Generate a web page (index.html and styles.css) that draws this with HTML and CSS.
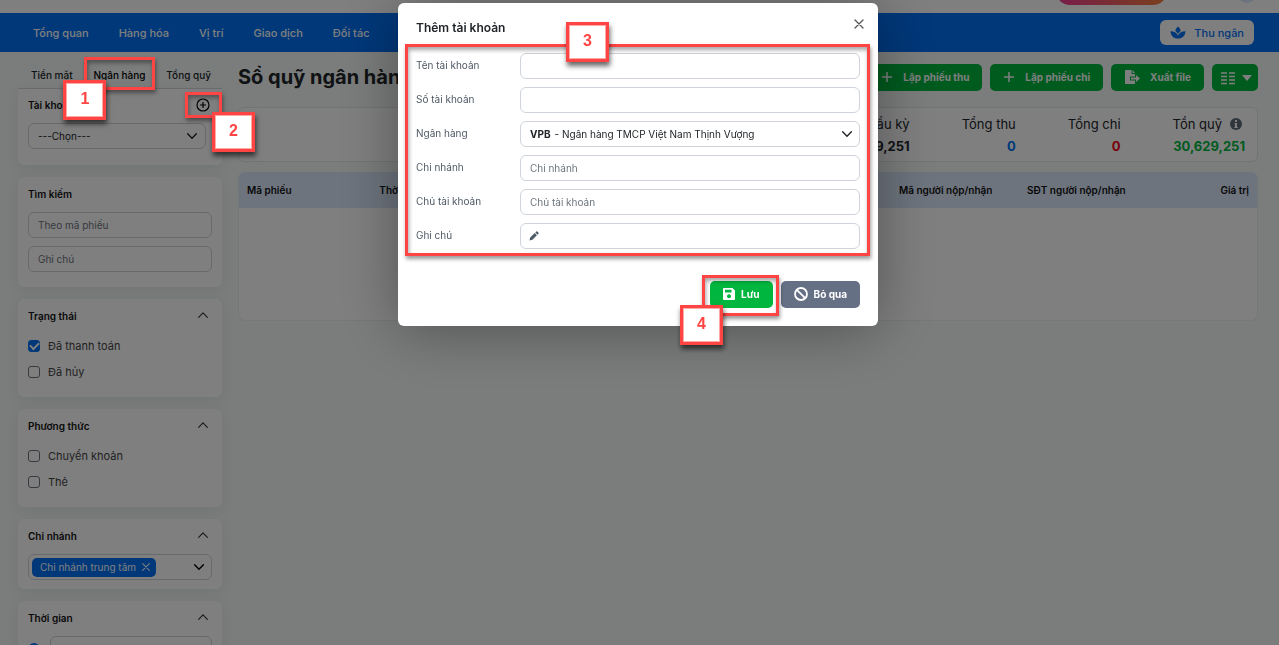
FILE: index.html
```html
<!DOCTYPE html>
<html lang="vi">
<head>
<meta charset="utf-8">
<meta name="viewport" content="width=device-width, initial-scale=1">
<title>Sổ quỹ ngân hàng</title>
<link rel="stylesheet" href="styles.css">
</head>
<body>
<svg class="sprite" aria-hidden="true">
  <symbol id="down" viewBox="0 0 16 16"><path d="M3 5.500l5 5 5-5" fill="none" stroke="currentColor" stroke-width="1.600" stroke-linecap="round" stroke-linejoin="round"/></symbol>
  <symbol id="up" viewBox="0 0 16 16"><path d="M3 9.500l5-5 5 5" fill="none" stroke="currentColor" stroke-width="1.300" stroke-linecap="round" stroke-linejoin="round"/></symbol>
  <symbol id="plus" viewBox="0 0 12 12"><path d="M6 1v10M1 6h10" fill="none" stroke="currentColor" stroke-width="1.500"/></symbol>
  <symbol id="cross" viewBox="0 0 12 12"><path d="M2 2l8 8M10 2l-8 8" fill="none" stroke="currentColor" stroke-width="1.300" stroke-linecap="round"/></symbol>
</svg>

<header class="topbar">
  <span class="promo"></span>
  <span class="avatar"></span>
</header>
<nav class="nav">
  <a class="nav-link" href="#">Tổng quan</a>
  <a class="nav-link" href="#">Hàng hóa</a>
  <a class="nav-link" href="#">Vị trí</a>
  <a class="nav-link" href="#">Giao dịch</a>
  <a class="nav-link" href="#">Đối tác</a>
  <button class="cashier" type="button">
    <svg class="icon-16" viewBox="0 0 16 16" aria-hidden="true"><path fill="currentColor" d="M8 1.500c1.800 1.500 2.600 3 2.600 4.500C9.500 6.800 8.500 7.900 8 9.200 7.500 7.900 6.500 6.800 5.400 6 5.400 4.500 6.200 3 8 1.500zM.5 6.200c4 0 6.500 1.600 7.500 4.600 1-3 3.500-4.600 7.500-4.600-.2 4.400-3 7.300-7.500 7.300S.7 10.600.5 6.200z"/></svg>
    Thu ngân
  </button>
</nav>

<div class="layout">
  <aside class="sidebar">
    <div class="tabs">
      <a class="tab" href="#">Tiền mặt</a>
      <a class="tab tab-active" href="#">Ngân hàng<span class="mark mark-tab"></span><span class="step step-1">1</span></a>
      <a class="tab" href="#">Tổng quỹ</a>
    </div>
    <section class="card card-account">
      <div class="card-head">
        <label class="card-title" for="account">Tài khoản</label>
        <button class="add" type="button" aria-label="Thêm tài khoản">
          <svg class="icon-14" viewBox="0 0 14 14" aria-hidden="true"><g fill="none" stroke="currentColor" stroke-width="1.200"><circle cx="7" cy="7" r="6"/><path d="M7 4v6M4 7h6"/></g></svg>
          <span class="mark mark-add"></span><span class="step step-2">2</span>
        </button>
      </div>
      <div class="field field-account">
        <select id="account"><option>---Chọn---</option></select>
        <svg class="icon-14"><use href="#down"/></svg>
      </div>
    </section>

    <section class="card card-search">
      <h2 class="card-title">Tìm kiếm</h2>
      <input class="field" type="text" placeholder="Theo mã phiếu" aria-label="Theo mã phiếu">
      <input class="field" type="text" placeholder="Ghi chú" aria-label="Ghi chú">
    </section>

    <section class="card card-checks">
      <div class="card-head"><h2 class="card-title">Trạng thái</h2><svg class="icon-14"><use href="#up"/></svg></div>
      <label class="check"><input type="checkbox" checked>Đã thanh toán</label>
      <label class="check"><input type="checkbox">Đã hủy</label>
    </section>

    <section class="card card-checks">
      <div class="card-head"><h2 class="card-title">Phương thức</h2><svg class="icon-14"><use href="#up"/></svg></div>
      <label class="check"><input type="checkbox">Chuyển khoản</label>
      <label class="check"><input type="checkbox">Thẻ</label>
    </section>

    <section class="card card-branch">
      <div class="card-head"><h2 class="card-title">Chi nhánh</h2><svg class="icon-14"><use href="#up"/></svg></div>
      <div class="field field-tags">
        <button class="tag" type="button">Chi nhánh trung tâm<svg class="icon-10"><use href="#cross"/></svg></button>
        <svg class="icon-14 dark"><use href="#down"/></svg>
      </div>
    </section>

    <section class="card card-time">
      <div class="card-head"><h2 class="card-title">Thời gian</h2><svg class="icon-14"><use href="#up"/></svg></div>
      <div class="time-row">
        <input type="radio" name="time" checked aria-label="Tháng này">
        <div class="field"><select aria-label="Thời gian"><option>Tháng này</option></select><svg class="icon-14"><use href="#down"/></svg></div>
      </div>
    </section>
  </aside>

  <main class="main">
    <div class="heading">
      <h1 class="title">Sổ quỹ ngân hàng</h1>
      <div class="actions">
        <button class="btn" type="button"><svg class="icon-12"><use href="#plus"/></svg>Lập phiếu thu</button>
        <button class="btn" type="button"><svg class="icon-12"><use href="#plus"/></svg>Lập phiếu chi</button>
        <button class="btn" type="button"><svg class="icon-16" viewBox="0 0 16 16" aria-hidden="true"><path fill="currentColor" d="M1 1h6.500v4H11v2.500H6v4h5V15H1zM8.500 1L11 4H8.500zM12 6l4 3.500-4 3.500v-2.500H7v-2h5z"/></svg>Xuất file</button>
        <button class="btn btn-columns" type="button" aria-label="Cột hiển thị"><svg class="icon-14" viewBox="0 0 14 14" aria-hidden="true"><path d="M0 2h6M8 2h6M0 5.500h6M8 5.500h6M0 9h6M8 9h6M0 12.500h6M8 12.500h6" stroke="currentColor" stroke-width="1.300"/></svg><svg class="caret" viewBox="0 0 10 6" aria-hidden="true"><path d="M0 0h10L5 6z" fill="currentColor"/></svg></button>
      </div>
    </div>

    <div class="summary">
      <div class="stat"><span>Quỹ đầu kỳ</span><strong>30,629,251</strong></div>
      <div class="stat"><span>Tổng thu</span><strong class="blue">0</strong></div>
      <div class="stat"><span>Tổng chi</span><strong class="red">0</strong></div>
      <div class="stat"><span class="stat-info">Tồn quỹ<svg class="icon-12" viewBox="0 0 12 12" aria-hidden="true"><circle cx="6" cy="6" r="6" fill="#5f6b7a"/><path d="M5 2h2v2H5zM4.500 5H7v4h.8v1H4.300V9H5V6h-.5z" fill="#fff"/></svg></span><strong class="green">30,629,251</strong></div>
    </div>

    <div class="table-card">
      <table class="table">
        <thead><tr><th class="col-code">Mã phiếu</th><th>Thời gian</th><th class="col-payer">Mã người nộp/nhận</th><th class="col-phone">SĐT người nộp/nhận</th><th class="col-value">Giá trị</th></tr></thead>
      </table>
    </div>
  </main>
</div>

<div class="backdrop"></div>
<div class="dialog-wrap">
  <div class="dialog" role="dialog" aria-modal="true" aria-labelledby="dialog-title">
    <div class="dialog-head">
      <h2 class="dialog-title" id="dialog-title">Thêm tài khoản</h2>
      <button class="close" type="button" aria-label="Đóng"><svg class="icon-12"><use href="#cross"/></svg></button>
    </div>
    <form class="form">
      <label for="name">Tên tài khoản</label><input class="field" id="name" type="text">
      <label for="number">Số tài khoản</label><input class="field" id="number" type="text">
      <label for="bank">Ngân hàng</label>
      <div class="field field-bank"><b>VPB</b><select id="bank"><option>- Ngân hàng TMCP Việt Nam Thịnh Vượng</option></select><svg class="icon-14"><use href="#down"/></svg></div>
      <label for="branch">Chi nhánh</label><input class="field" id="branch" type="text" placeholder="Chi nhánh">
      <label for="owner">Chủ tài khoản</label><input class="field" id="owner" type="text" placeholder="Chủ tài khoản">
      <label for="note">Ghi chú</label>
      <div class="field field-note"><svg class="icon-10" viewBox="0 0 10 10" aria-hidden="true"><path fill="currentColor" d="M.5 9.500L1.200 6.600 5.700 2.100l2.200 2.200L3.400 8.800zM6.300 1.500L7.300.5q.5-.4 1 0L9.500 1.700q.4.500 0 1L8.500 3.700z"/></svg><input id="note" type="text"></div>
      <span class="mark mark-form"></span><span class="step step-3">3</span>
    </form>
    <div class="dialog-foot">
      <div class="save-wrap">
        <button class="btn" type="button"><svg class="icon-12" viewBox="0 0 12 12" aria-hidden="true"><path fill="currentColor" fill-rule="evenodd" d="M1 0h8.500L12 2.500V11q0 1-1 1H1q-1 0-1-1V1q0-1 1-1zM2 1.800v2.700h6.500V1.800zM6 6.300a2 2 0 1 0 .01 0z"/></svg>Lưu</button>
        <span class="mark mark-save"></span><span class="step step-4">4</span>
      </div>
      <button class="btn btn-grey" type="button"><svg class="icon-14" viewBox="0 0 14 14" aria-hidden="true"><g fill="none" stroke="currentColor" stroke-width="1.800"><circle cx="7" cy="7" r="6"/><path d="M2.800 2.800l8.400 8.400"/></g></svg>Bỏ qua</button>
    </div>
  </div>
</div>
</body>
</html>
```
FILE: styles.css
```css
* { box-sizing: border-box; }
html { overflow: hidden; }
body {
  margin: 0;
  height: 100vh;
  overflow: hidden;
  background: #f5faf8;
  color: #212529;
  font: 10px/16px Inter, "Noto Sans", sans-serif;
}
button, input, select { font: inherit; color: inherit; }
button { cursor: pointer; }
h1, h2 { margin: 0; }
a { color: inherit; text-decoration: none; }
svg { flex: none; display: block; }
.sprite { position: absolute; width: 0; height: 0; }
.icon-10 { width: 10px; height: 10px; }
.icon-12 { width: 12px; height: 12px; }
.icon-14 { width: 14px; height: 14px; }
.icon-16 { width: 16px; height: 16px; }
.dark { color: #000; }

.topbar {
  display: flex;
  align-items: flex-end;
  justify-content: flex-end;
  gap: 70px;
  height: 13px;
  padding: 0 22px 8px 0;
  overflow: hidden;
  background: #fff;
}
.promo { width: 111px; height: 28px; border-radius: 14px; background: linear-gradient(90deg, #f03a96, #f5803a); }
.avatar { width: 20px; height: 20px; margin-bottom: 2px; border-radius: 10px; background: #dbe8fb; }

.nav {
  display: flex;
  align-items: center;
  gap: 30px;
  height: 39px;
  padding: 0 25px 0 33px;
  background: #0070f4;
  color: #fff;
  font-size: 11px;
  font-weight: 500;
}
.cashier {
  display: flex;
  align-items: center;
  gap: 8px;
  height: 25px;
  margin-left: auto;
  padding: 0 10px;
  border: 0;
  border-radius: 6px;
  background: #fff;
  color: #0070f4;
}

.layout { display: flex; gap: 16px; padding: 0 21px 0 18px; }
.sidebar { display: flex; flex-direction: column; flex: none; gap: 12px; width: 204px; }
.tabs {
  display: flex;
  justify-content: space-between;
  height: 37px;
  margin-bottom: -12px;
  padding: 15px 11px 0 13px;
  border-bottom: 1px solid #d5d9df;
  font-weight: 500;
}
.tab-active { position: relative; color: #000; }
.card {
  display: flex;
  flex-direction: column;
  padding: 8px 10px;
  border-radius: 6px;
  background: #fff;
  box-shadow: 0 4px 14px rgba(60, 70, 100, .08);
}
.card-head { display: flex; align-items: center; justify-content: space-between; padding-right: 2px; color: #333; }
.card-title { font-size: 10px; font-weight: 600; line-height: 18px; color: #111; }
.card-account { height: 76px; border-radius: 0 0 6px 6px; padding-top: 7px; }
.add { position: relative; padding: 0; border: 0; background: none; color: #000; }
.field {
  display: flex;
  align-items: center;
  width: 100%;
  height: 26px;
  padding: 0 9px;
  border: 1px solid #ced4da;
  border-radius: 6px;
  background: #fff;
  outline: 0;
}
.field::placeholder { color: #6c757d; opacity: 1; }
.field select, .field input { flex: 1; min-width: 0; padding: 0; border: 0; outline: 0; appearance: none; background: none; }
.field-account { width: 178px; margin-top: 9px; padding-right: 6px; }
.card-search { height: 110px; gap: 8px; }
.card-search .card-title { margin-bottom: 1px; }
.card-checks { height: 98px; }
.check { display: flex; align-items: center; gap: 8px; height: 16px; margin-top: 10px; color: #444; font-size: 11px; }
.card-head + .check { margin-top: 13px; }
.check input {
  appearance: none;
  display: grid;
  place-items: center;
  width: 12px;
  height: 12px;
  margin: 0;
  border: 1px solid #6c757d;
  border-radius: 3px;
}
.check input:checked { border-color: #0070f4; background: #0070f4; }
.check input:checked::after {
  content: "";
  width: 7px;
  height: 4px;
  margin-bottom: 2px;
  border: solid #fff;
  border-width: 0 0 2px 2px;
  transform: rotate(-45deg);
}
.card-branch { height: 70px; }
.field-tags { justify-content: space-between; margin-top: 9px; padding: 0 5px 0 3px; }
.tag {
  display: flex;
  align-items: center;
  gap: 5px;
  height: 19px;
  padding: 0 5px 0 8px;
  border: 0;
  border-radius: 5px;
  background: #0070f4;
  color: #fff;
}
.card-time { height: 98px; }
.time-row { display: flex; align-items: center; gap: 10px; margin-top: 9px; }
.time-row > input { appearance: none; flex: none; width: 12px; height: 12px; margin: 0; border-radius: 6px; background: #0070f4; }
.time-row .field { padding-right: 6px; }

.main { flex: 1; min-width: 0; }
.heading { display: flex; align-items: center; justify-content: space-between; margin-top: 12px; }
.title { font-size: 20px; font-weight: 700; line-height: 27px; }
.actions { display: flex; gap: 8px; }
.btn {
  display: flex;
  align-items: center;
  justify-content: center;
  gap: 10px;
  height: 27px;
  padding: 0 13px 2px;
  border: 0;
  border-radius: 5px;
  background: #00b63e;
  color: #fff;
  font-weight: 700;
}
.btn-columns { gap: 7px; padding: 0 6px 0 9px; }
.caret { width: 10px; height: 6px; }
.btn-grey { background: #667085; }

.summary {
  display: flex;
  justify-content: flex-end;
  gap: 52px;
  height: 55px;
  margin-top: 16px;
  padding: 5px 12px;
  border: 1px solid #e4e6ea;
  border-radius: 6px;
  background: #fff;
  font-size: 13px;
  line-height: 22px;
}
.stat { display: flex; flex-direction: column; align-items: flex-end; }
.stat-info { display: flex; align-items: center; gap: 8px; padding-right: 3px; }
.blue { color: #0070f4; }
.red { color: #f00014; }
.green { color: #00b63e; }

.table-card { height: 149px; margin-top: 10px; border: 1px solid #eceef1; border-top: 0; border-radius: 6px; overflow: hidden; background: #fff; }
.table { width: 100%; border-collapse: collapse; table-layout: fixed; }
.table th { height: 36px; padding: 0 8px; background: #dbe8fb; font-weight: 600; text-align: left; white-space: nowrap; color: #111; }
.col-code { width: 13%; }
.col-payer { width: 128px; }
.col-phone { width: 122px; }
.table .col-value { width: 116px; text-align: right; }

.backdrop { position: fixed; inset: 0; z-index: 10; background: rgba(0, 0, 0, .5); }
.dialog-wrap { position: fixed; inset: 0; z-index: 20; display: flex; align-items: flex-start; justify-content: center; padding: 3px 3px 0 0; }
.dialog { width: 480px; padding: 15px 18px 18px; border-radius: 6px; background: #fff; box-shadow: 0 4px 60px rgba(0, 0, 0, .35); }
.dialog-head { display: flex; justify-content: space-between; margin-bottom: 15px; }
.dialog-title { font-size: 12px; font-weight: 600; line-height: 20px; }
.close { align-self: flex-start; padding: 0; margin-right: -5px; border: 0; background: none; color: #555; }
.form {
  position: relative;
  display: grid;
  grid-template-columns: 104px 1fr;
  gap: 8px 0;
  color: #4f5965;
}
.form label { line-height: 24px; }
.field-bank { gap: 4px; padding-right: 5px; color: #212529; }
.field-bank b { font-weight: 700; }
.field-note { gap: 6px; padding-left: 8px; }
.dialog-foot { display: flex; justify-content: flex-end; gap: 8px; margin-top: 32px; }
.save-wrap { position: relative; }
.dialog-foot .btn { gap: 6px; }

/* Tutorial callouts */
.mark { position: absolute; z-index: 30; border: 3px solid #ff4444; box-shadow: 1px 3px 4px rgba(0, 0, 0, .4), inset 1px 3px 4px rgba(0, 0, 0, .35); pointer-events: none; }
.step {
  position: absolute;
  z-index: 31;
  width: 43px;
  height: 40px;
  border: 3px solid #ff4444;
  background: #fff;
  box-shadow: inset 0 0 0 1px #ffa8a8, 1px 4px 5px rgba(0, 0, 0, .6);
  color: #ff4444;
  font: bold 16px/32px "Liberation Sans", Arial, sans-serif;
  text-align: center;
}
.mark-tab { inset: -10px -10px -2px -9px; }
.step-1 { top: 13px; left: -30px; }
.mark-add { inset: -6px -12px -6px -11px; }
.step-2 { top: 14px; left: 16px; }
.mark-form { inset: -9px -10px -7px -11px; }
.step-3 { top: -31px; left: 150px; }
.mark-save { inset: -6px -6px -8px -8px; }
.step-4 { top: 24px; left: -30px; }
```
